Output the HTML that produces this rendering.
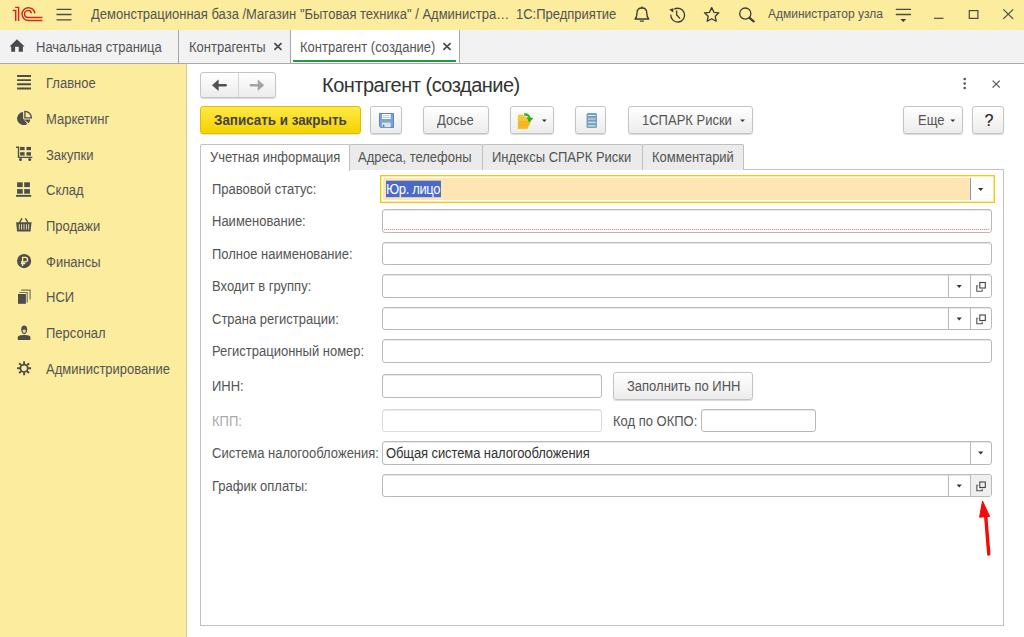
<!DOCTYPE html>
<html><head><meta charset="utf-8">
<style>
*{box-sizing:border-box;margin:0;padding:0}
html,body{width:1024px;height:637px;overflow:hidden;background:#fff;font-family:"Liberation Sans",sans-serif;font-size:13px;color:#545454}
.a{position:absolute}
#hdr{left:0;top:0;width:1024px;height:30px;background:#fbec9e}
#tabs{left:0;top:30px;width:1024px;height:34px;background:#f2f2f2;border-bottom:1px solid #a8a8a8}
#side{left:0;top:64px;width:187px;height:573px;background:#fbec9e;border-right:1px solid #d8c97c}
.t{white-space:nowrap;line-height:15px;transform:scaleY(1.1);transform-origin:0 3px}
.nt{transform:none}
.sep{width:1px;background:#a6a6a6}
.btn{border:1px solid #c4c4c4;border-radius:3px;background:linear-gradient(#fff,#ececec);box-shadow:0 1px 1px rgba(0,0,0,.15)}
.fld{border:1px solid #b5b5b5;border-radius:3px;background:#fff;height:24px;box-shadow:inset 0 1px 0 #e8e8e8}

</style></head><body>
<!-- header -->
<div id="hdr" class="a">
  <svg class="a" style="left:0;top:0" width="60" height="30" viewBox="0 0 60 30">
    <g fill="none" stroke="#d9241b" stroke-width="1.45" stroke-linecap="butt">
      <path d="M12.7 10.5 H15.7 V21.1"/>
      <path d="M15.2 7.35 H18.6 V21.1"/>
      <path d="M34.8 13.4 A6.39 6.39 0 1 0 28.45 20.44 H42.4"/>
      <path d="M31.35 13.4 A3.42 3.42 0 1 0 28.0 17.42 H42.4"/>
    </g>
  </svg>
  <svg class="a" style="left:0;top:0" width="80" height="30">
    <g stroke="#4a4a4a" stroke-width="1.3"><path d="M56.5 9.3H71.5M56.5 14.5H71.5M56.5 19.8H71.5"/></g>
  </svg>
  <div class="a t" style="left:91px;top:6px;font-size:13px;color:#545454">Демонстрационная база /Магазин "Бытовая техника" / Администра…</div>
  <div class="a t" style="left:516px;top:6px;font-size:13px;color:#545454">1С:Предприятие</div>
  <svg class="a" style="left:620px;top:0" width="150" height="30" viewBox="620 0 150 30">
    <g fill="none" stroke="#3a3a3a" stroke-width="1.3" stroke-linejoin="round">
      <path d="M635 19 C637 17.5 637 15.5 637 13 C637 9.8 639 8 641.9 8 C644.8 8 646.8 9.8 646.8 13 C646.8 15.5 646.8 17.5 648.8 19 Z"/>
      <path d="M641.9 6.5V8" />
      <path d="M674.2 9.2 A6.9 6.9 0 1 1 670.8 14.6"/>
      <path d="M676.6 10.5 V14.8 L680 18.6"/>
      <path d="M711.7 7.6 L713.9 12.3 L718.9 12.8 L715.2 16.2 L716.2 21.2 L711.7 18.7 L707.2 21.2 L708.2 16.2 L704.5 12.8 L709.5 12.3 Z"/>
      <circle cx="745.3" cy="13.6" r="5.6"/>
    </g>
    <path d="M639.6 20.4 H644.2 L643.6 21.8 H640.2Z" fill="#3a3a3a"/>
    <path d="M669.2 9.5 L673.5 8.2 L673.2 12.6 Z" fill="#3a3a3a"/>
    <path d="M749.2 17.6 L754.4 22" stroke="#3a3a3a" stroke-width="2.2"/>
  </svg>
  <div class="a t nt" style="left:768px;top:7px;font-size:12px;color:#545454">Администратор узла</div>
  <svg class="a" style="left:880px;top:0" width="144" height="30" viewBox="880 0 144 30">
    <g stroke="#4a4a4a" stroke-width="1.2" fill="none">
      <path d="M896.3 9.4H910.5M896.3 14.5H910.5" stroke-linecap="round" stroke-width="1.3"/>
      <path d="M934 18.3H943.5"/>
      <rect x="969.3" y="10.6" width="8.6" height="7.8"/>
      <path d="M1003.3 9.4 L1013.2 18.9 M1013.2 9.4 L1003.3 18.9"/>
    </g>
    <path d="M900.4 19H906.2L903.3 22Z" fill="#3a3a3a"/>
  </svg>
</div>
<!-- tabs -->
<div id="tabs" class="a">
  <svg class="a" style="left:0;top:0" width="30" height="33" viewBox="0 30 30 33">
    <path d="M17 39.2 L24.6 46.4 H22.9 V51.7 H18.7 V46.8 H15.1 V51.7 H11.2 V46.4 H9.5 Z" fill="#4a4a4a"/>
  </svg>
  <div class="a t" style="left:36px;top:9px;font-size:13px">Начальная страница</div>
  <div class="a sep" style="left:178px;top:0;height:33px"></div>
  <div class="a t" style="left:189px;top:9px;font-size:13px">Контрагенты</div>
  <svg class="a" style="left:270px;top:0" width="16" height="33" viewBox="270 30 16 33">
    <path d="M274.4 43.2 L281.5 49.8 M281.5 43.2 L274.4 49.8" stroke="#4a4a4a" stroke-width="1.7"/>
  </svg>
  <div class="a sep" style="left:290px;top:0;height:33px"></div>
  <div class="a" style="left:291px;top:0;width:168px;height:33px;background:#fff"></div>
  <div class="a t" style="left:300px;top:9px;font-size:13px">Контрагент (создание)</div>
  <svg class="a" style="left:438px;top:0" width="16" height="33" viewBox="438 30 16 33">
    <path d="M443.4 43.2 L450.6 49.8 M450.6 43.2 L443.4 49.8" stroke="#4a4a4a" stroke-width="1.7"/>
  </svg>
  <div class="a" style="left:293px;top:30px;width:163px;height:2px;background:#1c9e3c"></div>
  <div class="a sep" style="left:459px;top:0;height:33px"></div>
</div>
<!-- sidebar -->
<div id="side" class="a">
</div>
<svg class="a" style="left:12px;top:70px" width="24" height="24" viewBox="0 0 24 24"><path d="M5.1 6H19M5.1 10.1H19M5.1 14.3H19M5.1 18.5H19" stroke="#4d4d4d" stroke-width="1.9"/></svg>
<div class="a t" style="left:46px;top:75px">Главное</div>
<svg class="a" style="left:12px;top:106px" width="24" height="24" viewBox="0 0 24 24"><path d="M11.1 6.1 A6.5 6.5 0 1 0 15.3 17.9 L11.1 12.6Z" fill="#4d4d4d"/><path d="M12 13.5 L18.3 13.5 A6.3 6.3 0 0 1 16.6 17.2Z" fill="#4d4d4d"/><path d="M12.9 11.9 V5.4 A6.5 6.5 0 0 1 19.4 11.9Z" fill="none" stroke="#4d4d4d" stroke-width="1.3"/></svg>
<div class="a t" style="left:46px;top:111px">Маркетинг</div>
<svg class="a" style="left:12px;top:142px" width="24" height="24" viewBox="0 0 24 24"><path d="M4.1 5.2H6.5V15.4H20.3" fill="none" stroke="#4d4d4d" stroke-width="1.4"/><rect x="8.1" y="4.9" width="4.5" height="3.3" fill="#4d4d4d"/><rect x="14.5" y="4.9" width="4.5" height="3.3" fill="#4d4d4d"/><rect x="8.1" y="10.2" width="4.5" height="3.4" fill="#4d4d4d"/><rect x="14.5" y="10.2" width="4.5" height="3.4" fill="#4d4d4d"/><circle cx="8.5" cy="17.4" r="1.5" fill="#4d4d4d"/><circle cx="17.7" cy="17.4" r="1.5" fill="#4d4d4d"/></svg>
<div class="a t" style="left:46px;top:147px">Закупки</div>
<svg class="a" style="left:12px;top:177px" width="24" height="24" viewBox="0 0 24 24"><rect x="5.1" y="5.3" width="5.6" height="4.8" fill="#4d4d4d"/><rect x="12.2" y="5.3" width="5.7" height="4.8" fill="#4d4d4d"/><rect x="5.1" y="12.1" width="5.6" height="4.6" fill="#4d4d4d"/><rect x="12.2" y="12.1" width="5.7" height="4.6" fill="#4d4d4d"/><rect x="4.1" y="17.9" width="15.1" height="1.9" fill="#4d4d4d"/></svg>
<div class="a t" style="left:46px;top:182px">Склад</div>
<svg class="a" style="left:12px;top:213px" width="24" height="24" viewBox="0 0 24 24"><path d="M4.1 9.2H19.6L18.5 18.5H5.1Z" fill="#4d4d4d"/><path d="M7.3 11.2V16.6M9.6 11.2V16.6M12 11.2V16.6M14.4 11.2V16.6M16.7 11.2V16.6" stroke="#e8dc95" stroke-width="1"/><path d="M7.5 9.5L10 5.3M16 9.5L13.4 5.3" stroke="#4d4d4d" stroke-width="1.4"/></svg>
<div class="a t" style="left:46px;top:218px">Продажи</div>
<svg class="a" style="left:12px;top:249px" width="24" height="24" viewBox="0 0 24 24"><circle cx="12.1" cy="12.1" r="7.1" fill="#4d4d4d"/><path d="M10.6 17V8.3H13.3A2.3 2.3 0 0 1 13.3 12.9H8.9M8.9 14.5H13.3" fill="none" stroke="#fbec9e" stroke-width="1.3"/></svg>
<div class="a t" style="left:46px;top:254px">Финансы</div>
<svg class="a" style="left:12px;top:284px" width="24" height="24" viewBox="0 0 24 24"><path d="M9.2 6.1H18.1V15.5M7.2 8.5H15.2V18.5" fill="none" stroke="#4d4d4d" stroke-width="1.2" opacity=".75"/><rect x="6" y="10" width="7.9" height="9.8" fill="#4d4d4d"/></svg>
<div class="a t" style="left:46px;top:289px">НСИ</div>
<svg class="a" style="left:12px;top:320px" width="24" height="24" viewBox="0 0 24 24"><path d="M9.2 9.6 C9.2 6.6 10.4 5.5 12.2 5.5 C14 5.5 15.2 6.6 15.2 9.6 C15.2 12.3 13.9 14.2 12.2 14.2 C10.5 14.2 9.2 12.3 9.2 9.6Z" fill="#4d4d4d"/><path d="M10.5 10.2 C11.2 9.3 13.2 9.3 13.9 10.2 C13.9 11.9 13.1 13 12.2 13 C11.3 13 10.5 11.9 10.5 10.2Z" fill="#f3e49a" opacity=".9"/><path d="M5.8 20V17.2C5.8 15.9 8.4 15 12.1 15C15.8 15 18.4 15.9 18.4 17.2V20Z" fill="#4d4d4d"/></svg>
<div class="a t" style="left:46px;top:325px">Персонал</div>
<svg class="a" style="left:12px;top:356px" width="24" height="24" viewBox="0 0 24 24"><circle cx="12.1" cy="12.2" r="3.65" fill="none" stroke="#4d4d4d" stroke-width="1.7"/><path d="M16.10 12.20L19.10 12.20M14.93 15.03L17.05 17.15M12.10 16.20L12.10 19.20M9.27 15.03L7.15 17.15M8.10 12.20L5.10 12.20M9.27 9.37L7.15 7.25M12.10 8.20L12.10 5.20M14.93 9.37L17.05 7.25" stroke="#4d4d4d" stroke-width="1.9"/></svg>
<div class="a t" style="left:46px;top:361px">Администрирование</div>
<!-- form -->
<div class="a btn" style="left:200px;top:72px;width:76px;height:26px"></div>
<div class="a" style="left:238px;top:73px;width:1px;height:24px;background:#d6d6d6"></div>
<svg class="a" style="left:200px;top:72px" width="76" height="26" viewBox="200 72 76 26"><path d="M217 85.2H225.6" stroke="#505050" stroke-width="2.6" stroke-linecap="round"/><path d="M212.4 85.2L218.3 79.9V90.4Z" fill="#505050" stroke="#505050" stroke-width=".6" stroke-linejoin="round"/><path d="M251 85.2H259" stroke="#a4a4a4" stroke-width="2.6" stroke-linecap="round"/><path d="M263.9 85.2L258 79.9V90.4Z" fill="#a4a4a4" stroke="#a4a4a4" stroke-width=".6" stroke-linejoin="round"/></svg>
<div class="a t nt" style="left:322px;top:74px;font-size:20px;line-height:22px;color:#333;letter-spacing:-0.5px">Контрагент (создание)</div>
<svg class="a" style="left:955px;top:70px" width="50" height="25" viewBox="955 70 50 25"><circle cx="964.7" cy="79" r="1.3" fill="#555"/><circle cx="964.7" cy="83.5" r="1.3" fill="#555"/><circle cx="964.7" cy="88" r="1.3" fill="#555"/><path d="M992.6 80.6L999.8 87.6M999.8 80.6L992.6 87.6" stroke="#555" stroke-width="1.2"/></svg>
<div class="a" style="left:200px;top:106px;width:161px;height:28px;border:1px solid #dcc000;border-radius:3px;background:linear-gradient(#ffea45,#f5d200);box-shadow:0 1px 1px rgba(0,0,0,.12)"></div>
<div class="a t" style="left:214px;top:112px;font-size:13.4px;font-weight:bold;color:#444">Записать и закрыть</div>
<div class="a btn" style="left:370px;top:106px;width:32px;height:28px"></div>
<div class="a btn" style="left:423px;top:106px;width:66px;height:28px"></div>
<div class="a t" style="left:437px;top:112px">Досье</div>
<div class="a btn" style="left:510px;top:106px;width:44px;height:28px"></div>
<div class="a btn" style="left:575px;top:106px;width:31px;height:28px"></div>
<div class="a btn" style="left:628px;top:106px;width:125px;height:28px"></div>
<div class="a t" style="left:642px;top:112px">1СПАРК Риски</div>
<div class="a btn" style="left:903px;top:106px;width:60px;height:28px"></div>
<div class="a t" style="left:918px;top:112px">Еще</div>
<div class="a btn" style="left:972px;top:106px;width:32px;height:28px"></div>
<div class="a t nt" style="left:984.5px;top:111.5px;font-size:16px;line-height:17px;color:#222;-webkit-text-stroke:0.15px #222">?</div>
<svg class="a" style="left:360px;top:100px" width="420" height="40" viewBox="360 100 420 40"><path d="M541.9 119.60000000000001H546.6999999999999L544.3 122.0Z" fill="#333"/><path d="M740.1 119.60000000000001H744.9L742.5 122.0Z" fill="#333"/></svg>
<svg class="a" style="left:900px;top:100px" width="70" height="40" viewBox="900 100 70 40"><path d="M950.4 119.60000000000001H955.1999999999999L952.8 122.0Z" fill="#333"/></svg>
<div class="a" style="left:200px;top:169px;width:804px;height:457px;border:1px solid #c2c2c2"></div>
<div class="a" style="left:200px;top:144px;width:150px;height:27px;border:1px solid #c2c2c2;border-bottom:none;background:#fff;border-radius:2px 2px 0 0"></div>
<div class="a" style="left:349px;top:144px;width:134px;height:26px;border:1px solid #c0c0c0;border-bottom:none;background:#ebebeb;border-radius:2px 2px 0 0"></div>
<div class="a t" style="left:358px;top:149px">Адреса, телефоны</div>
<div class="a" style="left:482px;top:144px;width:161px;height:26px;border:1px solid #c0c0c0;border-bottom:none;background:#ebebeb;border-radius:2px 2px 0 0"></div>
<div class="a t" style="left:492px;top:149px">Индексы СПАРК Риски</div>
<div class="a" style="left:642px;top:144px;width:102px;height:26px;border:1px solid #c0c0c0;border-bottom:none;background:#ebebeb;border-radius:2px 2px 0 0"></div>
<div class="a t" style="left:652px;top:149px">Комментарий</div>
<div class="a t" style="left:210px;top:149px">Учетная информация</div>
<div class="a" style="left:380px;top:175px;width:615px;height:28px;border:1px solid #f6c70a;box-shadow:inset 0 0 0 0.6px #fad85a;background:#fff"></div>
<div class="a" style="left:383px;top:178px;width:588px;height:22px;background:#fde6b3;border-radius:2px 0 0 2px;border-right:1px solid #8a9ab0"></div>
<div class="a t" style="left:386px;top:181px;color:#fff;background:#4a6ac8;letter-spacing:-0.35px;padding-right:1px">Юр. лицо</div>
<div class="a t" style="left:212px;top:181px;color:#545454">Правовой статус:</div>
<div class="a fld" style="left:382px;top:209px;width:610px;height:24px;border-color:#bababa;"></div>
<div class="a" style="left:384px;top:229px;width:606px;height:1px;background:repeating-linear-gradient(90deg,#f39090 0 1px,#fbdcdc 1px 2px)"></div>
<div class="a t" style="left:212px;top:213px;color:#545454">Наименование:</div>
<div class="a fld" style="left:382px;top:242px;width:610px;height:23px;border-color:#bababa;"></div>
<div class="a t" style="left:212px;top:245.5px;color:#545454">Полное наименование:</div>
<div class="a fld" style="left:382px;top:274px;width:610px;height:24px;border-color:#bababa;"></div>
<div class="a t" style="left:212px;top:278px;color:#545454">Входит в группу:</div>
<div class="a fld" style="left:382px;top:307px;width:610px;height:23px;border-color:#bababa;"></div>
<div class="a t" style="left:212px;top:310.5px;color:#545454">Страна регистрации:</div>
<div class="a fld" style="left:382px;top:339px;width:610px;height:24px;border-color:#bababa;"></div>
<div class="a t" style="left:212px;top:343px;color:#545454">Регистрационный номер:</div>
<div class="a fld" style="left:382px;top:374px;width:220px;height:24px;border-color:#bababa;"></div>
<div class="a t" style="left:212px;top:378px;color:#545454">ИНН:</div>
<div class="a btn" style="left:613px;top:372px;width:140px;height:28px"></div>
<div class="a t" style="left:627px;top:378px">Заполнить по ИНН</div>
<div class="a fld" style="left:382px;top:409px;width:220px;height:23px;border-color:#dcdcdc;"></div>
<div class="a t" style="left:212px;top:412.5px;color:#a8a8a8">КПП:</div>
<div class="a t" style="left:613px;top:412.5px;color:#545454">Код по ОКПО:</div>
<div class="a fld" style="left:701px;top:409px;width:115px;height:23px;border-color:#bababa;"></div>
<div class="a fld" style="left:382px;top:441px;width:610px;height:24px;border-color:#bababa;"></div>
<div class="a t" style="left:212px;top:445px;color:#545454">Система налогообложения:</div>
<div class="a t" style="left:386px;top:445px;color:#333;letter-spacing:-0.1px">Общая система налогообложения</div>
<div class="a fld" style="left:382px;top:474px;width:610px;height:23px;border-color:#bababa;"></div>
<div class="a t" style="left:212px;top:477.5px;color:#545454">График оплаты:</div>
<svg class="a" style="left:900px;top:170px" width="110" height="340" viewBox="900 170 110 340"><path d="M971 475H988.5Q991 475 991 477.5V493.5Q991 496 988.5 496H971Z" fill="#efefef"/><path d="M978.1 188.1H983.3L980.7 191.1Z" fill="#333"/><path d="M948.5 274.5V297.5M970.5 274.5V297.5" stroke="#bababa" stroke-width="1"/><path d="M956.6 285.1H961.8L959.2 288.1Z" fill="#333"/><rect x="979.8" y="282.5" width="5.5" height="5.5" fill="none" stroke="#444" stroke-width="1.1"/><path d="M978.2 285.8H976.8V291.2H982.2V289.3" fill="none" stroke="#555" stroke-width="1.1"/><path d="M948.5 307.5V329.5M970.5 307.5V329.5" stroke="#bababa" stroke-width="1"/><path d="M956.6 317.6H961.8L959.2 320.6Z" fill="#333"/><rect x="979.8" y="315.0" width="5.5" height="5.5" fill="none" stroke="#444" stroke-width="1.1"/><path d="M978.2 318.3H976.8V323.7H982.2V321.8" fill="none" stroke="#555" stroke-width="1.1"/><path d="M970.5 441.5V464.5" stroke="#bababa" stroke-width="1"/><path d="M978.1 451.6H983.3L980.7 454.6Z" fill="#333"/><path d="M948.5 474.5V496.5M970.5 474.5V496.5" stroke="#bababa" stroke-width="1"/><path d="M956.6 484.6H961.8L959.2 487.6Z" fill="#333"/><rect x="979.8" y="482.0" width="5.5" height="5.5" fill="none" stroke="#444" stroke-width="1.1"/><path d="M978.2 485.3H976.8V490.7H982.2V488.8" fill="none" stroke="#555" stroke-width="1.1"/></svg>
<svg class="a" style="left:960px;top:495px" width="40" height="70" viewBox="960 495 40 70"><path d="M985.6 515 L988.8 554" stroke="#f50a0a" stroke-width="3.4" stroke-linecap="round"/><path d="M982.5 501 L979.6 517.2 L989.7 516.4Z" fill="#f50a0a" stroke="#f50a0a" stroke-width="1" stroke-linejoin="round"/></svg>
<svg class="a" style="left:370px;top:104px" width="240" height="32" viewBox="370 104 240 32">
<path d="M379.5 113.5H393.5V127.5H380.8L379.5 126.2Z" fill="#7aa3da" stroke="#5a85c4" stroke-width="1"/>
<rect x="382" y="114" width="8.6" height="5" fill="#fff"/>
<path d="M383 115.7H389.6M383 117.5H389.6" stroke="#a8bcd6" stroke-width=".8"/>
<rect x="382" y="122.6" width="8.6" height="4.6" fill="#dde3e6"/>
<rect x="382.8" y="124.8" width="1.6" height="2" fill="#3c6fc0"/>
<path d="M517.8 116.2 Q517.8 114.5 519.6 114.5 H522.8 L524.6 116.6 H527 L529 119 V123 L527.2 128.8 H517.8Z" fill="#f2c93a"/>
<path d="M518.5 121 L531.5 120.5 L527.5 128.8 H517.8Z" fill="#f5b820"/>
<path d="M523.8 113.2 C527.8 112.8 530 114.6 530.2 117.2 L533.4 118.2 L529 122.5 L526.8 117.6 L528.6 117.6 C528.2 116.2 526.5 115.2 524.6 116 Z" fill="#2fae2a"/>
<path d="M586.5 114.5 Q586.5 113 588 113 H595.5 Q597 113 597 114.5 V126.5 Q597 128 595.5 128 H588 Q586.5 128 586.5 126.5Z" fill="#7b9fc0"/>
<path d="M588 115.5H595.5M588 119H595.5M588 122.4H595.5M588 125.8H595.5" stroke="#d2e3f2" stroke-width="1.2"/>
</svg>
</body></html>
